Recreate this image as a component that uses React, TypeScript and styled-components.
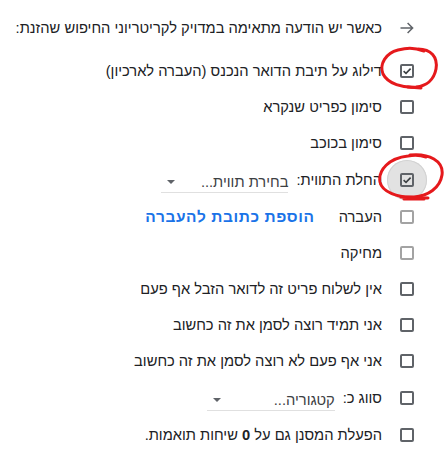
import React from 'react'
import styled, { createGlobalStyle } from 'styled-components'

const GlobalStyle = createGlobalStyle`
  html, body {
    margin: 0;
    padding: 0;
    background: #ffffff;
  }
  body {
    font-family: "Liberation Sans", Arial, sans-serif;
    color: #202124;
  }
`

const Page = styled.div`
  position: relative;
  direction: rtl;
  width: 445px;
  height: 464px;
  box-sizing: border-box;
  padding: 10px 31px 0 0;
  font-size: 14.7px;
  overflow: hidden;
`

const Header = styled.div`
  display: flex;
  align-items: center;
  gap: 18px;
  height: 36px;
`

const Rows = styled.div`
  display: flex;
  flex-direction: column;
  margin-top: 7px;
`

const Row = styled.div<{ $tall?: boolean }>`
  display: flex;
  align-items: center;
  gap: 18px;
  height: ${(p) => (p.$tall ? '38px' : '36px')};
`

const BoxWrap = styled.span`
  position: relative;
  display: inline-flex;
  width: 14px;
  height: 14px;
  flex: none;
`

const Halo = styled.span`
  position: absolute;
  left: 50%;
  top: 50%;
  width: 40px;
  height: 40px;
  margin: -20px 0 0 -20px;
  border-radius: 50%;
  background: #e2e2e2;
  box-shadow: inset 0 0 0 1px #d2d2d2;
`

const Box = styled.span<{ $disabled?: boolean }>`
  position: relative;
  box-sizing: border-box;
  width: 14px;
  height: 14px;
  border: 2px solid ${(p) => (p.$disabled ? '#a3a3a3' : '#5f6368')};
  border-radius: 2px;
  display: flex;
  align-items: center;
  justify-content: center;
  svg {
    display: block;
  }
`

const Label = styled.span`
  white-space: nowrap;
  line-height: 18px;
`

const Inline = styled.div<{ $gap: number }>`
  display: flex;
  align-items: center;
  gap: ${(p) => p.$gap}px;
`

const Link = styled.a`
  color: #1a73e8;
  font-size: 15.5px;
  font-weight: bold;
  letter-spacing: 0.6px;
  line-height: 18px;
  text-decoration: none;
  white-space: nowrap;
  cursor: pointer;
`

const Select = styled.div<{ $width: number }>`
  display: flex;
  align-items: center;
  width: ${(p) => p.$width}px;
  height: 20px;
  margin-top: 4px;
  border-bottom: 1px solid #e0e0e0;
  color: #3c4043;
  white-space: nowrap;
  line-height: 18px;
`

const Caret = styled.span`
  margin-right: auto;
  margin-left: 6px;
  width: 0;
  height: 0;
  border-left: 4px solid transparent;
  border-right: 4px solid transparent;
  border-top: 4px solid #5f6368;
`

const Marks = styled.svg`
  position: absolute;
  left: 0;
  top: 0;
  pointer-events: none;
`

const Check = ({ checked, disabled, hover }: { checked?: boolean; disabled?: boolean; hover?: boolean }) => (
  <BoxWrap>
    {hover && <Halo />}
    <Box $disabled={disabled}>
      {checked && (
        <svg width="10" height="10" viewBox="0 0 10 10">
          <polyline points="1.6,5.2 4,7.4 8.6,2.6" fill="none" stroke="#3c4043" strokeWidth="1.6" />
        </svg>
      )}
    </Box>
  </BoxWrap>
)

const items = [
  'אין לשלוח פריט זה לדואר הזבל אף פעם',
  'אני תמיד רוצה לסמן את זה כחשוב',
  'אני אף פעם לא רוצה לסמן את זה כחשוב',
]

const App = () => {
  return (
    <Page>
      <GlobalStyle />
      <Header>
        <svg width="14" height="12" viewBox="0 0 14 12">
          <path d="M0.5 6 H12.6 M7.6 1 L12.6 6 L7.6 11" fill="none" stroke="#5f6368" strokeWidth="1.5" />
        </svg>
        <Label>כאשר יש הודעה מתאימה במדויק לקריטריוני החיפוש שהזנת:</Label>
      </Header>
      <Rows>
        <Row>
          <Check checked />
          <Label>דילוג על תיבת הדואר הנכנס (העברה לארכיון)</Label>
        </Row>
        <Row>
          <Check />
          <Label>סימון כפריט שנקרא</Label>
        </Row>
        <Row>
          <Check />
          <Label>סימון בכוכב</Label>
        </Row>
        <Row $tall>
          <Check checked hover />
          <Inline $gap={8}>
            <Label>החלת התווית:</Label>
            <Select $width={127}>
              <span>בחירת תווית...</span>
              <Caret />
            </Select>
          </Inline>
        </Row>
        <Row>
          <Check disabled />
          <Inline $gap={24}>
            <Label>העברה</Label>
            <Link>הוספת כתובת להעברה</Link>
          </Inline>
        </Row>
        <Row>
          <Check disabled />
          <Label>מחיקה</Label>
        </Row>
        {items.map((t) => (
          <Row key={t}>
            <Check />
            <Label>{t}</Label>
          </Row>
        ))}
        <Row $tall>
          <Check />
          <Inline $gap={8}>
            <Label>סווג כ:</Label>
            <Select $width={128}>
              <span>קטגוריה...</span>
              <Caret />
            </Select>
          </Inline>
        </Row>
        <Row>
          <Check />
          <Label>
            הפעלת המסנן גם על <b>0</b> שיחות תואמות.
          </Label>
        </Row>
      </Rows>
      <Marks width="445" height="464" viewBox="0 0 445 464">
        <g fill="none" stroke="#e5191c" strokeWidth="3" strokeLinecap="round" strokeLinejoin="round">
          <path d="M418 49 C431 49 438 57 436 69 C434 80 426 86 416 87 C403 88 388 84 383 74 C379 64 386 53 398 50 C406 48 413 47 424 51" />
          <path d="M408 87 L421 88" />
          <path d="M410 155 C429 153 444 161 442 175 C440 188 428 196 414 197 C398 198 382 192 380 182 C378 170 389 158 408 156 C414 155 420 155 426 157" />
          <path d="M401 197 L428 198 M404 199 L424 199" />
        </g>
      </Marks>
    </Page>
  )
}

export default App
